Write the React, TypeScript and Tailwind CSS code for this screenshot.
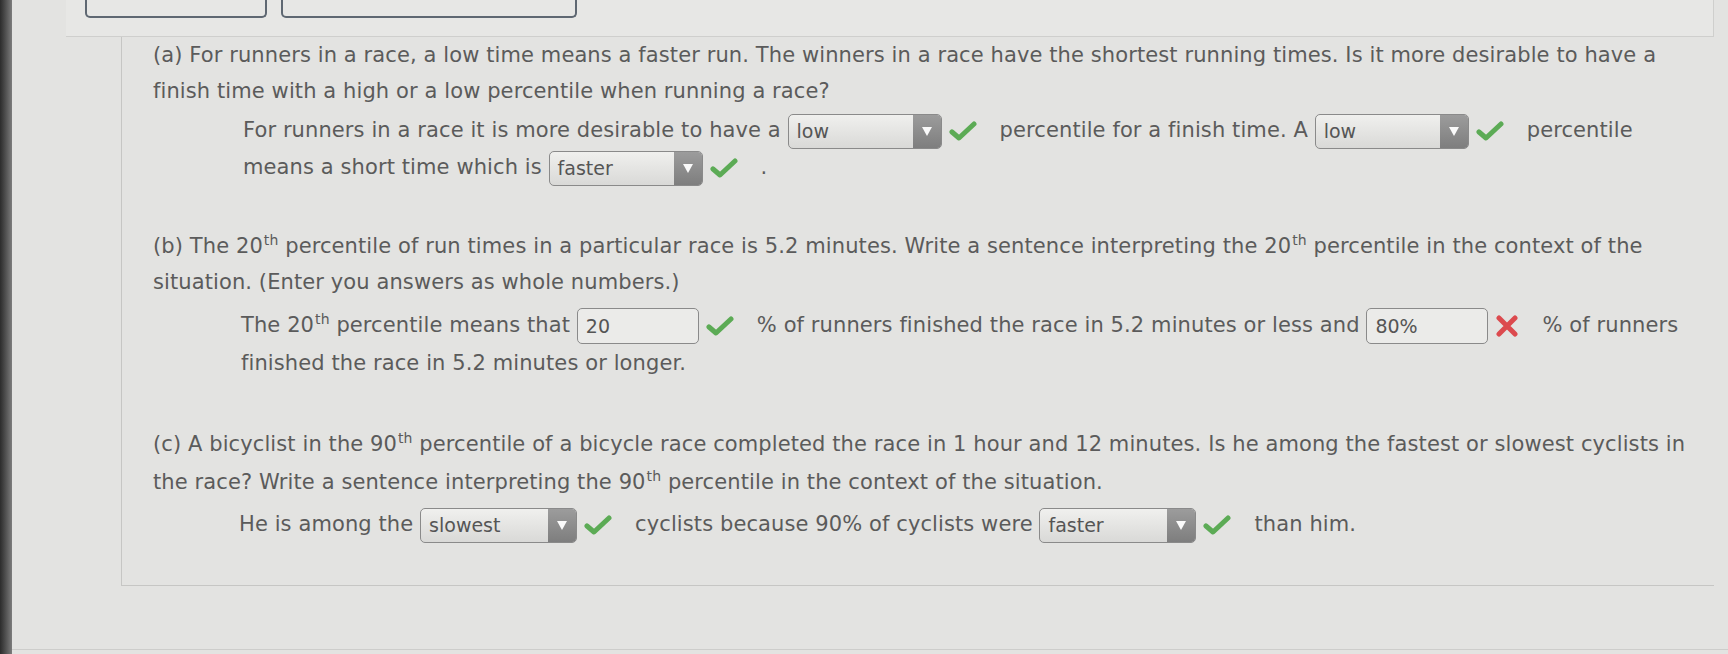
import React from 'react';

function Check() {
  return (
    <svg width="28" height="22" viewBox="0 0 28 22" className="inline-block align-middle mx-[7px]">
      <path d="M3 12 L10 18 L25 4" stroke="#5cab55" strokeWidth="5" fill="none" strokeLinecap="round" strokeLinejoin="round" />
    </svg>
  );
}

function Cross() {
  return (
    <svg width="24" height="22" viewBox="0 0 24 22" className="inline-block align-middle mx-[7px]">
      <path d="M4 3 L20 19 M20 3 L4 19" stroke="#dc4a4e" strokeWidth="5" fill="none" strokeLinecap="round" />
    </svg>
  );
}

function Select({ value, w = 'w-[154px]' }: { value: string; w?: string }) {
  return (
    <span
      className={`inline-flex align-middle h-[35px] ${w} rounded-[5px] border border-[#8a8a8a] overflow-hidden bg-gradient-to-b from-[#f0f0ee] to-[#d9d9d7] tracking-normal`}
    >
      <span className="flex-1 pl-2 leading-[33px] text-[#555] text-[19px]">{value}</span>
      <span className="w-[28px] bg-gradient-to-b from-[#9c9c9c] to-[#7e7e7e] flex items-center justify-center">
        <svg width="10" height="9" viewBox="0 0 10 9">
          <path d="M0 0 L10 0 L5 9 Z" fill="#fafafa" />
        </svg>
      </span>
    </span>
  );
}

function Input({ value }: { value: string }) {
  return (
    <span className="inline-flex align-middle h-[36px] w-[122px] rounded-[5px] border border-[#8a8a8a] bg-[#ebebe9] pl-2 leading-[34px] text-[#555] text-[19px] tracking-normal">
      {value}
    </span>
  );
}

function Th() {
  return <span className="text-[14px] leading-[0] align-[8px] ml-[1px]">th</span>;
}

export default function App() {
  return (
    <div className="w-[1728px] h-[654px] bg-[#e3e3e1] flex overflow-hidden font-['DejaVu_Sans',sans-serif] text-[21px] tracking-[0.1px] text-[#5b5b5b]">
      {/* dark bezel */}
      <div className="w-3 bg-gradient-to-r from-[#2c2c2c] to-[#7d7d7d]" />

      <div className="flex-1 flex flex-col">
        {/* top button strip */}
        <div className="h-[37px] ml-[54px] mr-[14px] border-b border-r border-[#cfcfcd] bg-[#e7e7e5] flex gap-[14px] pl-[19px]">
          <div className="w-[182px] h-[18px] border-2 border-t-0 border-[#5f6872] rounded-b-[5px]" />
          <div className="w-[296px] h-[18px] border-2 border-t-0 border-[#5f6872] rounded-b-[5px]" />
        </div>

        {/* question panel */}
        <div className="ml-[109px] mr-[14px] h-[549px] border-l border-b border-[#c6c6c4] pl-[31px] leading-[36px]">
          {/* (a) */}
          <p>
            (a) For runners in a race, a low time means a faster run. The winners in a race have the shortest running
            times. Is it more desirable to have a finish time with a high or a low percentile when running a race?
          </p>
          <div className="pl-[90px] mt-[3px] leading-[37px]">
            For runners in a race it is more desirable to have a <Select value="low" />
            <Check />
            <span className="ml-[16px]">percentile for a finish time. A </span>
            <Select value="low" />
            <Check />
            <span className="ml-[16px]">percentile</span>
            <br />
            means a short time which is <Select value="faster" />
            <Check />
            <span className="ml-[16px]">.</span>
          </div>

          {/* (b) */}
          <p className="mt-[42px]">
            (b) The 20<Th /> percentile of run times in a particular race is 5.2 minutes. Write a sentence interpreting
            the 20<Th /> percentile in the context of the situation. (Enter you answers as whole numbers.)
          </p>
          <div className="pl-[88px] mt-[6px] leading-[38px]">
            The 20<Th /> percentile means that <Input value="20" />
            <Check />
            <span className="ml-[16px]">% of runners finished the race in 5.2 minutes or less and </span>
            <Input value="80%" />
            <Cross />
            <span className="ml-[16px]">% of runners</span>
            <br />
            finished the race in 5.2 minutes or longer.
          </div>

          {/* (c) */}
          <p className="mt-[43px] leading-[38px]">
            (c) A bicyclist in the 90<Th /> percentile of a bicycle race completed the race in 1 hour and 12 minutes. Is
            he among the fastest or slowest cyclists in the race? Write a sentence interpreting the 90<Th /> percentile
            in the context of the situation.
          </p>
          <div className="pl-[86px] mt-[4px] leading-[38px]">
            He is among the <Select value="slowest" w="w-[157px]" />
            <Check />
            <span className="ml-[16px]">cyclists because 90% of cyclists were </span>
            <Select value="faster" w="w-[157px]" />
            <Check />
            <span className="ml-[16px]">than him.</span>
          </div>
        </div>

        <div className="mt-[63px] border-t border-[#cdcdcb]" />
      </div>
    </div>
  );
}
